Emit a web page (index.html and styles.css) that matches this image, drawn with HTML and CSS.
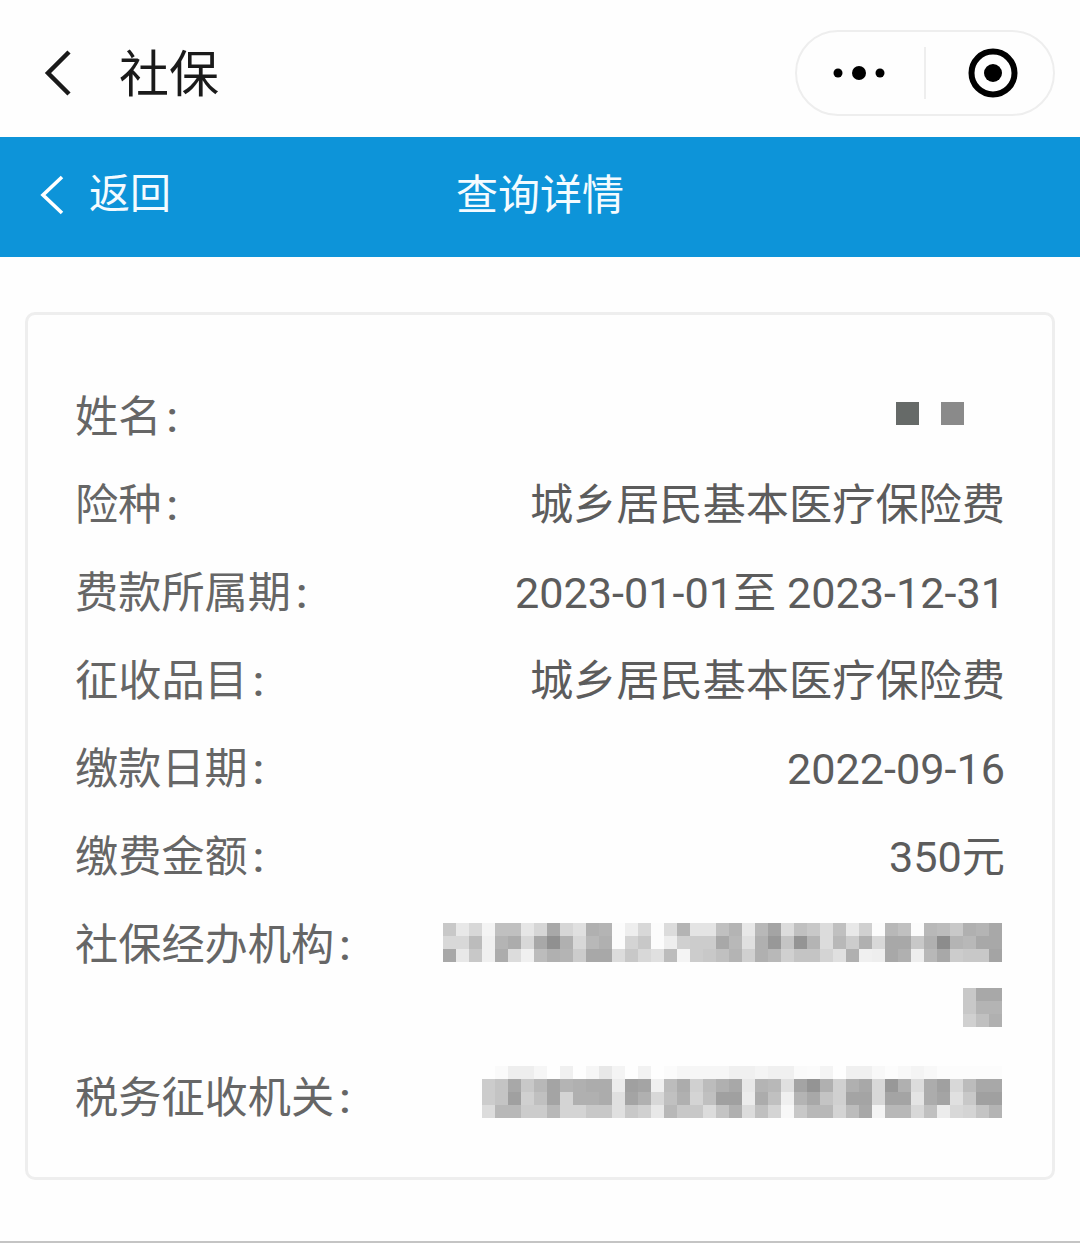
FILE: index.html
```html
<!DOCTYPE html>
<html lang="zh-CN">
<head>
    <meta charset="UTF-8">
    <meta name="viewport" content="width=device-width, initial-scale=1.0">
    <link rel="stylesheet" href="styles.css">
    <title>社保</title>
</head>
<body>

    <div class="nav">
        <svg class="nav-back" width="28" height="46" viewBox="0 0 28 46"><path d="M25 2 L4 23 L25 44" fill="none" stroke="#1a1a1a" stroke-width="4.5"/></svg>
        <div class="nav-title">社保</div>
        <div class="capsule">
            <svg class="capsule-more" width="60" height="20" viewBox="0 0 60 20"><circle cx="9" cy="10" r="4.5"/><circle cx="30" cy="10" r="7"/><circle cx="51" cy="10" r="4.5"/></svg>
            <div class="capsule-line"></div>
            <svg class="capsule-close" width="52" height="52" viewBox="0 0 52 52"><circle cx="26" cy="26" r="21.5" fill="none" stroke="#000" stroke-width="6"/><circle cx="26" cy="26" r="9"/></svg>
        </div>
    </div>

    <div class="header">
        <div class="header-back">
            <svg width="28" height="42" viewBox="0 0 28 42"><path d="M24 3 L5 21 L24 39" fill="none" stroke="#fff" stroke-width="3.6"/></svg>
            <span>返回</span>
        </div>
        <div class="header-title">查询详情</div>
    </div>

    <div class="card">
        <div class="row">
            <div class="label">姓名<span class="colon">:</span></div>
            <div class="value name-value"><i class="square dark"></i><i class="square light"></i></div>
        </div>
        <div class="row">
            <div class="label">险种<span class="colon">:</span></div>
            <div class="value">城乡居民基本医疗保险费</div>
        </div>
        <div class="row">
            <div class="label">费款所属期<span class="colon">:</span></div>
            <div class="value">2023-01-01至 2023-12-31</div>
        </div>
        <div class="row">
            <div class="label">征收品目<span class="colon">:</span></div>
            <div class="value">城乡居民基本医疗保险费</div>
        </div>
        <div class="row">
            <div class="label">缴款日期<span class="colon">:</span></div>
            <div class="value">2022-09-16</div>
        </div>
        <div class="row">
            <div class="label">缴费金额<span class="colon">:</span></div>
            <div class="value">350元</div>
        </div>
        <div class="row tall-row">
            <div class="label">社保经办机构<span class="colon">:</span></div>
            <div class="value">
                <div class="mosaic mosaic-org" id="mosaicOrg"></div>
                <div class="mosaic mosaic-tail" id="mosaicOrgTail"></div>
            </div>
        </div>
        <div class="row">
            <div class="label">税务征收机关<span class="colon">:</span></div>
            <div class="value">
                <div class="mosaic mosaic-tax" id="mosaicTax"></div>
            </div>
        </div>
    </div>

    <div class="bottom-line"></div>

    <script src="app.js"></script>
</body>
</html>
```

FILE: styles.css
```css
body {
    display: flex;
    flex-direction: column;
    height: 1243px;
    margin: 0;
    overflow: hidden;
    font-family: Roboto, "Noto Sans CJK SC", sans-serif;
    background-color: #fefefe;
}

.nav {
    display: flex;
    align-items: center;
    height: 137px;
    flex: none;
    padding: 9px 25px 0 44px;
    box-sizing: border-box;
}

.nav-back {
    margin-right: 47px;
}

.nav-title {
    margin-top: 3px;
    font-size: 50px;
    line-height: 60px;
    color: #1a1a1a;
}

.capsule {
    display: flex;
    align-items: center;
    width: 260px;
    height: 86px;
    margin-left: auto;
    box-sizing: border-box;
    border: 2px solid #eee;
    border-radius: 43px;
}

.capsule-more {
    margin-left: 32px;
}

.capsule-line {
    width: 2px;
    height: 52px;
    margin-left: 35px;
    background-color: #eee;
}

.capsule-close {
    margin-left: 41px;
}

.header {
    position: relative;
    display: flex;
    align-items: center;
    justify-content: center;
    height: 120px;
    flex: none;
    padding-bottom: 12px;
    box-sizing: border-box;
    background-color: #0d94d9;
    color: #f4fbff;
}

.header-back {
    position: absolute;
    left: 38px;
    top: 0;
    bottom: 4px;
    display: flex;
    align-items: center;
    gap: 23px;
    font-size: 41px;
}

.header-back span {
    padding-bottom: 10px;
}

.header-title {
    font-size: 42px;
}

.card {
    width: 1030px;
    margin: 55px 0 0 25px;
    padding: 57px 47px 36px;
    box-sizing: border-box;
    border: 3px solid #eee;
    border-radius: 10px;
    background-color: #fefefe;
}

.row {
    display: flex;
    align-items: center;
    justify-content: space-between;
    height: 88px;
    padding-top: 4px;
    box-sizing: border-box;
    font-size: 43.2px;
    line-height: 60px;
}

.tall-row {
    align-items: flex-start;
    height: 153px;
    padding-top: 16px;
}

.label {
    color: #666;
    white-space: nowrap;
}

.colon {
    margin-left: 5px;
    font-weight: 500;
}

.value {
    color: #5c5c5c;
    text-align: right;
    white-space: nowrap;
}

.name-value {
    display: flex;
    gap: 22px;
    padding: 0 41px 10px 0;
}

.square {
    display: block;
    width: 23px;
    height: 23px;
}

.square.dark {
    background-color: #666a68;
}

.square.light {
    background-color: #8a8a8a;
}

.mosaic {
    display: grid;
    grid-auto-columns: 13px;
    grid-auto-rows: 13px;
    justify-content: end;
    margin-right: 3px;
}

.mosaic-org {
    margin-top: 7px;
}

.mosaic-tail {
    margin-top: 26px;
}

.mosaic-tax {
    margin-bottom: 14px;
}

.mosaic span {
    display: block;
}

.bottom-line {
    height: 2px;
    margin-top: auto;
    background-color: #c4c4c4;
}
```

FILE: app.js
```js
// pixelated blocks over the private fields, one string per row, two hex digits per cell
function drawMosaic(id, rows) {
    const box = document.getElementById(id);
    rows.forEach((row, r) => {
        for (let c = 0; c < row.length / 2; c++) {
            const cell = document.createElement("span");
            const v = row.substr(c * 2, 2);
            cell.style.background = "#" + v + v + v;
            cell.style.gridRow = r + 1;
            cell.style.gridColumn = c + 1;
            box.appendChild(cell);
        }
    });
}

drawMosaic("mosaicOrg", [
    "c8e8d8f4c0c0e6d6a8d6e0b0b4fceed8fcdcb4e4e4c0b4e8b8a4dcc0c8dcc0e8d0fcb8c0fcb8bcc8b0b4a8",
    "d8d8bcf0b4acd8a890b0d8b8b0fcd4c8fceed0cccca8b8e0b098c494b4dcb8ccb0d8a8a8c8b08cb4b8a8a8",
    "a8e8c8f0acdcf0bcb0b4cca8a8dcc8d8e0bcf4ccc8c0b4d0b0b8d0c4c4d4e0b0f0eea8b0eeb8a8ccc8c8a4"
]);

drawMosaic("mosaicOrgTail", [
    "c8a8a8",
    "c8b4b4",
    "d0c0b0"
]);

drawMosaic("mosaicTax", [
    "fefaeeeef6fef0fef6e8f4fef2fefbf6f6f6f6f0f0f4f0f0fafbf4fef0f0f8fcf8f4f8fcfcfcfcfc",
    "ccc4a8c8b8a4b4b0acaceca0a4f0bcacd0bcb0a8e8b4b8e0a494b0d0b0a8d898b0dcaca0d8bca8a8",
    "ccc4a0d0c0a4d4b0b0ace0a4b0d8c0b0d4c0a0a0ecacc0f0b4a8c4d0a4a4d8a4a4e4aca4e0c8a0a0",
    "dcb8b8ccccb8d4d4c8c8e0c8d0e8b8c8c8dcc4b0dcc0d4f8c8b8b8d4bca8f4b8b8d8c0ecd8d4c4b4"
]);
```
